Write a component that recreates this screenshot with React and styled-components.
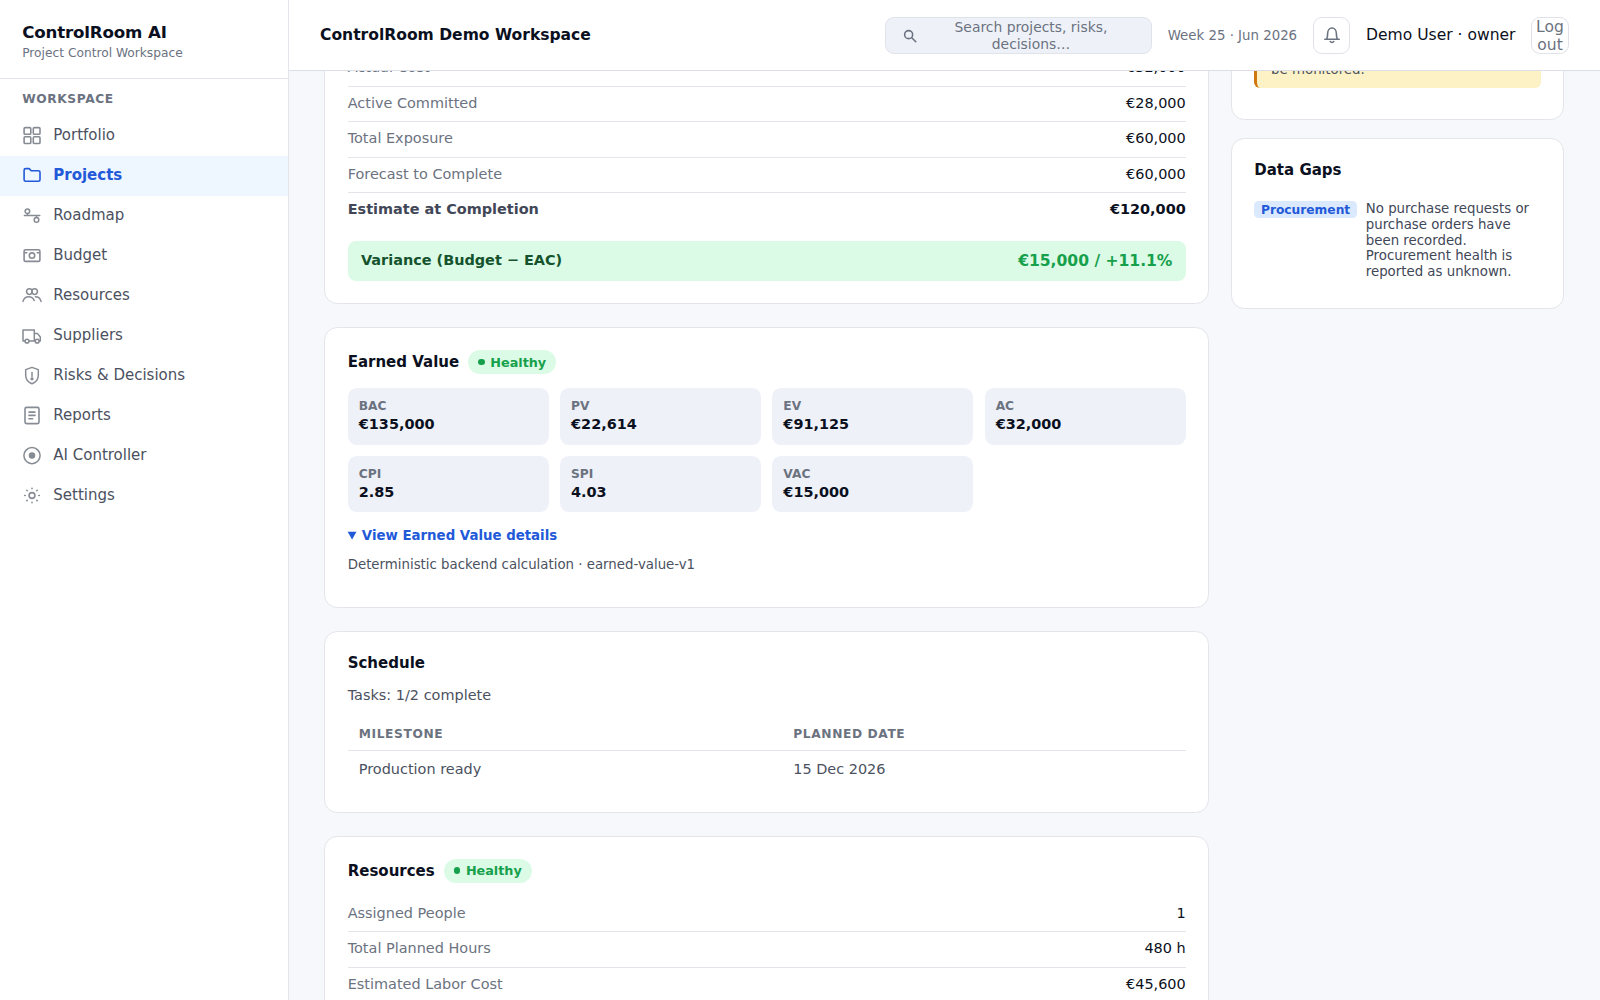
import React from 'react';
import styled, { createGlobalStyle, css } from 'styled-components';

const color = {
  ink: '#0b1020',
  body: '#4b5160',
  muted: '#6b7280',
  line: '#e3e5ea',
  canvas: '#f6f8fc',
  tile: '#eef1f8',
  blue: '#2259d9',
  green: '#16a04c',
  greenBg: '#dcfbe6',
};

const GlobalStyle = createGlobalStyle`
  *, *::before, *::after {
    box-sizing: border-box;
  }

  html, body {
    margin: 0;
    height: 100%;
    overflow: hidden;
  }

  body {
    font-family: "DejaVu Sans", sans-serif;
    font-size: 15.56px;
    color: ${color.ink};
    background: ${color.canvas};
  }

  h1, h2, p {
    margin: 0;
  }
`;

const Shell = styled.div`
  display: grid;
  grid-template-columns: 288.9px 1fr;
  height: 100vh;
`;

const Sidebar = styled.aside`
  background: #fff;
  border-right: 1px solid ${color.line};
`;

const Brand = styled.div`
  height: 79px;
  padding: 23px 22.2px 0;
  border-bottom: 1px solid ${color.line};
`;

const BrandName = styled.div`
  font-size: 16.67px;
  font-weight: 700;
  line-height: 20px;
  letter-spacing: -0.01em;
`;

const BrandSub = styled.div`
  margin-top: 2.2px;
  font-size: 12.22px;
  line-height: 16px;
  color: ${color.muted};
`;

const NavLabel = styled.div`
  padding: 12.5px 22.2px 0;
  height: 36.6px;
  font-size: 12.22px;
  font-weight: 700;
  line-height: 15px;
  letter-spacing: 0.05em;
  text-transform: uppercase;
  color: ${color.muted};
`;

const NavItem = styled.a`
  display: flex;
  align-items: center;
  gap: 11.1px;
  height: 40px;
  padding: 0 22.2px 1px;
  font-size: 15px;
  line-height: 17px;
  color: ${color.body};

  svg {
    width: 20px;
    height: 20px;
    color: #868b94;
  }

  ${props => props.$active && css`
    color: ${color.blue};
    font-weight: 700;
    background: #eef6ff;

    svg {
      color: ${color.blue};
    }
  `}
`;

const Main = styled.div`
  display: flex;
  flex-direction: column;
  min-width: 0;
  height: 100vh;
`;

const Topbar = styled.header`
  display: flex;
  align-items: center;
  justify-content: space-between;
  flex: none;
  height: 71px;
  padding: 1px 31.1px 0;
  background: #fff;
  border-bottom: 1px solid #dcdfe5;
`;

const WorkspaceName = styled.h1`
  font-size: 15.56px;
  line-height: 19px;
  font-weight: 700;
`;

const Tools = styled.div`
  display: flex;
  align-items: center;
  gap: 15.6px;
`;

const Search = styled.button`
  display: flex;
  align-items: center;
  gap: 8.9px;
  width: 266.7px;
  height: 37.8px;
  padding: 0 16px 0 15.5px;
  border: 1px solid #dfe3ea;
  border-radius: 8.9px;
  background: ${color.tile};
  font: 13.89px/17px "DejaVu Sans", sans-serif;
  color: ${color.muted};

  svg {
    flex: none;
    width: 16px;
    height: 16px;
    margin-top: 1px;
  }

  span {
    flex: 1;
    padding-top: 0.7px;
  }
`;

const Week = styled.span`
  padding-top: 1px;
  font-size: 13.33px;
  color: ${color.muted};
`;

const SquareButton = styled.button`
  display: flex;
  align-items: center;
  justify-content: center;
  width: 37.8px;
  height: 37.8px;
  padding: 0;
  border: 1px solid #dfe2e8;
  border-radius: 8.9px;
  background: #fff;
  font: 15.56px/18px "DejaVu Sans", sans-serif;
  color: ${color.muted};

  svg {
    width: 20px;
    height: 20px;
  }
`;

const Scroll = styled.main`
  flex: 1;
  min-height: 0;
  overflow: hidden;
  display: flex;
  align-items: flex-start;
  gap: 22.2px;
  padding: 0 35.6px;
`;

/* both columns are scrolled part way, so their first card starts above the fold */
const Column = styled.div`
  display: flex;
  flex-direction: column;
  flex: ${props => (props.$width ? 'none' : '1')};
  width: ${props => props.$width || 'auto'};
  gap: ${props => props.$gap};
  margin-top: ${props => props.$scrolled};
`;

const Card = styled.section`
  height: ${props => props.$height || 'auto'};
  padding: 22.2px;
  border: 1px solid ${color.line};
  border-radius: 13.3px;
  background: #fff;
`;

const CardHead = styled.div`
  display: flex;
  align-items: center;
  gap: 8.9px;
  margin-bottom: ${props => props.$space || '13.8px'};
`;

const CardTitle = styled.h2`
  font-size: 15px;
  font-weight: 700;
  line-height: 18px;
`;

const Pill = styled.span`
  display: inline-flex;
  align-items: center;
  gap: 5.6px;
  height: 24px;
  padding: 0 10px;
  border-radius: 12px;
  background: ${color.greenBg};
  color: ${color.green};
  font-size: 12.78px;
  font-weight: 700;

  &::before {
    content: '';
    width: 6.7px;
    height: 6.7px;
    border-radius: 50%;
    background: currentColor;
  }
`;

const Row = styled.div`
  display: flex;
  align-items: center;
  justify-content: space-between;
  height: 35.56px;
  padding-bottom: 1px;
  border-bottom: 1px solid ${color.line};
  font-size: 14.44px;
  line-height: 17px;
  color: ${color.muted};

  span:last-child {
    color: ${color.ink};
  }

  ${props => props.$total && css`
    height: 34.4px;
    border-bottom: 0;
    font-weight: 700;
    color: #414757;
  `}
`;

const Variance = styled.div`
  display: flex;
  align-items: center;
  justify-content: space-between;
  height: 39.5px;
  margin-top: 13.8px;
  padding: 0 13.3px 1px;
  border-radius: 8px;
  background: ${color.greenBg};
  font-size: 14.44px;
  line-height: 17px;
  font-weight: 700;
  color: #14532d;

  strong {
    font-size: 15.56px;
    line-height: 18px;
    color: ${color.green};
  }
`;

const Tiles = styled.div`
  display: grid;
  grid-template-columns: repeat(4, 1fr);
  gap: 11.1px;
`;

const Tile = styled.div`
  height: 56.7px;
  padding: 11px 11.1px;
  border-radius: 8.9px;
  background: ${color.tile};
  font-weight: 700;

  div:first-child {
    font-size: 12.22px;
    line-height: 15px;
    color: ${color.muted};
  }

  div:last-child {
    margin-top: 2.2px;
    font-size: 14.44px;
    line-height: 17px;
  }
`;

const Details = styled.details`
  margin-top: 15.8px;
  font-size: 13.33px;
  line-height: 16px;
  color: ${color.body};

  summary {
    color: ${color.blue};
    font-weight: 700;
  }

  p {
    margin-top: 12.6px;
  }
`;

const Tasks = styled.p`
  padding-top: 1px;
  font-size: 14.44px;
  line-height: 17px;
  color: ${color.body};
`;

const Table = styled.table`
  width: 100%;
  margin-top: 12px;
  border-collapse: collapse;
  text-align: left;

  th {
    height: 34.5px;
    padding: 1.5px 11.1px 0;
    border-bottom: 1px solid ${color.line};
    font-size: 12.22px;
    letter-spacing: 0.05em;
    text-transform: uppercase;
    color: ${color.muted};
  }

  th:first-child {
    width: 434.5px;
  }

  td {
    height: 37px;
    padding: 0 11.1px;
    font-size: 14.44px;
    color: ${color.body};
  }
`;

const Warning = styled.div`
  padding: 22.5px 13.8px 10px;
  border-left: 3.5px solid #d0780f;
  border-radius: 6px;
  background: #fdf1c6;
  font-size: 13.33px;
  line-height: 15.56px;
  color: ${color.body};
`;

const Gap = styled.div`
  display: flex;
  align-items: flex-start;
  gap: 8.9px;
  font-size: 13.33px;
  line-height: 15.56px;
  color: #414757;
`;

const Tag = styled.span`
  flex: none;
  padding: 1.1px 6.7px;
  border-radius: 4.4px;
  background: #dbe9fe;
  color: ${color.blue};
  font-size: 12.22px;
  font-weight: 700;
  line-height: 14.5px;
`;

const Icon = ({ children, width = 1.4 }) => (
  <svg viewBox="0 0 20 20" fill="none" stroke="currentColor" strokeWidth={width} strokeLinecap="round" strokeLinejoin="round">
    {children}
  </svg>
);

const nav = [
  ['Portfolio', <Icon width={1.6}>
    <rect x="2.1" y="2.6" width="6.7" height="6.7" rx="1.1" />
    <rect x="11.3" y="2.6" width="6.7" height="6.7" rx="1.1" />
    <rect x="2.1" y="11.8" width="6.7" height="6.7" rx="1.1" />
    <rect x="11.3" y="11.8" width="6.7" height="6.7" rx="1.1" />
  </Icon>],
  ['Projects', <Icon width={1.6}>
    <path d="M2.1 5.2c0-.9.7-1.6 1.6-1.6h3.5l2 2.1h7.2c.9 0 1.6.7 1.6 1.6v7.4c0 .9-.7 1.6-1.6 1.6H3.7c-.9 0-1.6-.7-1.6-1.6z" />
  </Icon>],
  ['Roadmap', <Icon width={1.5}>
    <circle cx="5.4" cy="6.2" r="2.3" />
    <circle cx="14.5" cy="14.9" r="2.3" />
    <path d="M2.4 10.6h15.4M5.4 8.5v2.1M14.5 10.6v2" />
  </Icon>],
  ['Budget', <Icon width={1.6}>
    <rect x="2.1" y="4.8" width="15.8" height="11.6" rx="1.4" />
    <circle cx="10" cy="10.6" r="2.7" />
    <path d="M3 7.7h1.8M15.2 7.7H17" />
  </Icon>],
  ['Resources', <Icon width={1.5}>
    <circle cx="7.4" cy="6.6" r="2.8" />
    <circle cx="12.6" cy="6.6" r="2.8" />
    <path d="M1 16.4c.8-3 3-4.7 5.6-4.7s4.7 1.4 5.6 3.8M13.4 11.7c2.800 0 4.900 1.700 5.600 4.700" />
  </Icon>],
  ['Suppliers', <Icon width={1.5}>
    <path d="M2.9 15.9H1V5h11.3v10.9H7M12.3 8.6h3.3l2.7 3.4v3.9h-1.100M12.300 15.900h1" />
    <circle cx="5" cy="16.2" r="1.9" />
    <circle cx="15.2" cy="16.2" r="1.9" />
  </Icon>],
  ['Risks & Decisions', <Icon width={1.5}>
    <path d="M10 2.4l6.3 2.2v5.6c0 4-2.6 7-6.3 8.5-3.7-1.5-6.3-4.500-6.300-8.500V4.600z" />
    <path d="M10 7.4v4.2" />
    <circle cx="10" cy="13.8" r=".9" fill="currentColor" />
  </Icon>],
  ['Reports', <Icon width={1.6}>
    <rect x="3" y="2.4" width="14" height="16.2" rx="1.5" />
    <path d="M7 7.1h6M7 10.4h6M7 13.7h3.6" />
  </Icon>],
  ['AI Controller', <Icon width={1.5}>
    <circle cx="10" cy="10.6" r="8.1" />
    <circle cx="10" cy="10.6" r="2.5" fill="currentColor" />
  </Icon>],
  ['Settings', <Icon width={1.6}>
    <circle cx="10" cy="10.5" r="2.9" />
    <path d="M10 3.2v.5M10 17.3v.5M2.7 10.5h.5M16.800 10.500h.5M4.800 5.300l.4.4M14.800 15.300l.4.4M4.800 15.700l.4-.4M14.800 5.700l.4-.4" />
  </Icon>],
];

const budget = [
  ['Actual Cost', '€32,000'],
  ['Active Committed', '€28,000'],
  ['Total Exposure', '€60,000'],
  ['Forecast to Complete', '€60,000'],
];

const earned = [
  ['BAC', '€135,000'],
  ['PV', '€22,614'],
  ['EV', '€91,125'],
  ['AC', '€32,000'],
  ['CPI', '2.85'],
  ['SPI', '4.03'],
  ['VAC', '€15,000'],
];

const resources = [
  ['Assigned People', '1'],
  ['Total Planned Hours', '480 h'],
  ['Estimated Labor Cost', '€45,600'],
];

const Rows = ({ items }) => items.map(([label, value]) => (
  <Row key={label}>
    <span>{label}</span>
    <span>{value}</span>
  </Row>
));

const App = () => (
  <Shell>
    <GlobalStyle />
    <Sidebar>
      <Brand>
        <BrandName>ControlRoom AI</BrandName>
        <BrandSub>Project Control Workspace</BrandSub>
      </Brand>
      <NavLabel>Workspace</NavLabel>
      <nav>
        {nav.map(([label, icon]) => (
          <NavItem key={label} $active={label === 'Projects'}>
            {icon}
            {label}
          </NavItem>
        ))}
      </nav>
    </Sidebar>

    <Main>
      <Topbar>
        <WorkspaceName>ControlRoom Demo Workspace</WorkspaceName>
        <Tools>
          <Search>
            <Icon width={2}>
              <circle cx="8.3" cy="8.3" r="5" />
              <path d="M12.2 12.2l5 5" />
            </Icon>
            <span>Search projects, risks, decisions…</span>
          </Search>
          <Week>Week 25 · Jun 2026</Week>
          <SquareButton>
            <Icon width={1.6}>
              <path d="M2.8 14.2h14.4M4.6 14.2c.8-1.3 1-2.6 1-5.4C5.6 5.5 7.4 3 10 3s4.4 2.5 4.4 5.8c0 2.8.2 4.1 1 5.4M8.2 16.6c.9 1.1 2.7 1.1 3.6 0" />
            </Icon>
          </SquareButton>
          <span>Demo User · owner</span>
          <SquareButton>Log out</SquareButton>
        </Tools>
      </Topbar>

      <Scroll>
        <Column $gap="22.8px" $scrolled="-43.1px">
          <Card>
            <Rows items={budget} />
            <Row $total>
              <span>Estimate at Completion</span>
              <span>€120,000</span>
            </Row>
            <Variance>
              Variance (Budget − EAC)
              <strong>€15,000 / +11.1%</strong>
            </Variance>
          </Card>

          <Card $height="281.5px">
            <CardHead>
              <CardTitle>Earned Value</CardTitle>
              <Pill>Healthy</Pill>
            </CardHead>
            <Tiles>
              {earned.map(([label, value]) => (
                <Tile key={label}>
                  <div>{label}</div>
                  <div>{value}</div>
                </Tile>
              ))}
            </Tiles>
            <Details open>
              <summary>View Earned Value details</summary>
              <p>Deterministic backend calculation · earned-value-v1</p>
            </Details>
          </Card>

          <Card $height="181.5px">
            <CardHead>
              <CardTitle>Schedule</CardTitle>
            </CardHead>
            <Tasks>Tasks: 1/2 complete</Tasks>
            <Table>
              <thead>
                <tr>
                  <th>Milestone</th>
                  <th>Planned date</th>
                </tr>
              </thead>
              <tbody>
                <tr>
                  <td>Production ready</td>
                  <td>15 Dec 2026</td>
                </tr>
              </tbody>
            </Table>
          </Card>

          <Card $height="220px">
            <CardHead>
              <CardTitle>Resources</CardTitle>
              <Pill>Healthy</Pill>
            </CardHead>
            <Rows items={resources} />
          </Card>
        </Column>

        <Column $width="333.3px" $gap="17.8px" $scrolled="-54.5px">
          <Card $height="103.5px">
            <Warning>be monitored.</Warning>
          </Card>
          <Card $height="171px">
            <CardHead $space="22.5px">
              <CardTitle>Data Gaps</CardTitle>
            </CardHead>
            <Gap>
              <Tag>Procurement</Tag>
              <span>No purchase requests or purchase orders have been recorded. Procurement health is reported as unknown.</span>
            </Gap>
          </Card>
        </Column>
      </Scroll>
    </Main>
  </Shell>
);

export default App;
